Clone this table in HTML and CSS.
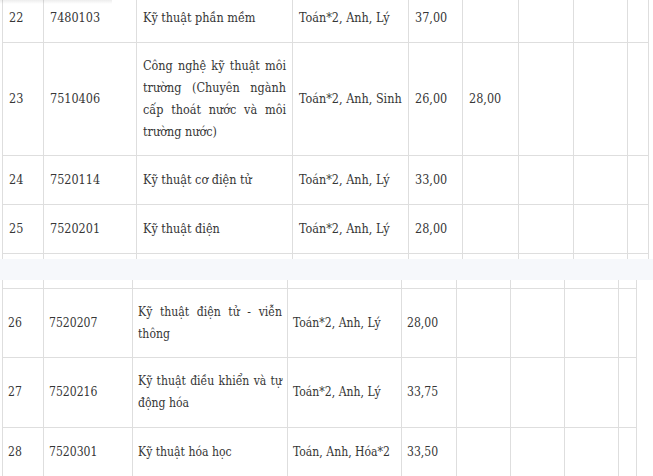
FILE: index.html
```html
<!DOCTYPE html>
<html lang="vi">
<head>
<meta charset="utf-8">
<title>Điểm chuẩn</title>
<link rel="stylesheet" href="styles.css">
</head>
<body>
<div class="page">
  <div class="piece piece-top">
    <table class="grid grid-top">
      <colgroup>
        <col class="c1"><col class="c2"><col class="c3"><col class="c4"><col class="c5"><col class="c6"><col class="c7"><col class="c8"><col class="c9">
      </colgroup>
      <tbody>
        <tr><td>22</td><td>7480103</td><td class="name">Kỹ thuật phần mềm</td><td>Toán*2, Anh, Lý</td><td>37,00</td><td></td><td></td><td></td><td></td></tr>
        <tr><td>23</td><td>7510406</td><td class="name">Công nghệ kỹ thuật môi trường (Chuyên ngành cấp thoát nước và môi trường nước)</td><td>Toán*2, Anh, Sinh</td><td>26,00</td><td>28,00</td><td></td><td></td><td></td></tr>
        <tr><td>24</td><td>7520114</td><td class="name">Kỹ thuật cơ điện tử</td><td>Toán*2, Anh, Lý</td><td>33,00</td><td></td><td></td><td></td><td></td></tr>
        <tr><td>25</td><td>7520201</td><td class="name">Kỹ thuật điện</td><td>Toán*2, Anh, Lý</td><td>28,00</td><td></td><td></td><td></td><td></td></tr>
        <tr><td></td><td></td><td class="name"></td><td></td><td></td><td></td><td></td><td></td><td></td></tr>
      </tbody>
    </table>
  </div>
  <div class="band"></div>
  <div class="piece piece-bottom">
    <table class="grid grid-bottom">
      <colgroup>
        <col class="c1"><col class="c2"><col class="c3"><col class="c4"><col class="c5"><col class="c6"><col class="c7"><col class="c8"><col class="c9">
      </colgroup>
      <tbody>
        <tr class="stub"><td></td><td></td><td></td><td></td><td></td><td></td><td></td><td></td><td></td></tr>
        <tr><td>26</td><td>7520207</td><td class="name">Kỹ thuật điện tử - viễn thông</td><td>Toán*2, Anh, Lý</td><td>28,00</td><td></td><td></td><td></td><td></td></tr>
        <tr class="tall"><td>27</td><td>7520216</td><td class="name">Kỹ thuật điều khiển và tự động hóa</td><td>Toán*2, Anh, Lý</td><td>33,75</td><td></td><td></td><td></td><td></td></tr>
        <tr><td>28</td><td>7520301</td><td class="name">Kỹ thuật hóa học</td><td>Toán, Anh, Hóa*2</td><td>33,50</td><td></td><td></td><td></td><td></td></tr>
      </tbody>
    </table>
  </div>
</div>
</body>
</html>
```
FILE: styles.css
```css
html, body {
  margin: 0;
  padding: 0;
  background: #ffffff;
}

.page {
  width: 653px;
  height: 476px;
  overflow: hidden;
  font-family: "DejaVu Serif", "Liberation Serif", serif;
  font-stretch: condensed;
  font-size: 12.5px;
  line-height: 22px;
  color: #363636;
}

.piece {
  overflow: hidden;
  padding-left: 2px;
}

.piece-top {
  position: relative;
  height: 259px;
}

.piece-top::before {
  content: "";
  position: absolute;
  left: 0;
  top: 0;
  width: 112px;
  height: 4px;
  background: linear-gradient(to bottom, rgba(0, 0, 0, 0.07), rgba(0, 0, 0, 0));
}

.piece-bottom {
  height: 196px;
}

.band {
  height: 21px;
  background: #f6f8fb;
}

.grid {
  border-collapse: collapse;
  table-layout: fixed;
}

.grid td {
  border: 1px solid #dedede;
  padding: 12px 6px;
  vertical-align: middle;
  text-align: left;
  overflow: hidden;
}

.grid tr {
  height: 49px;
}

.grid td.name {
  text-align: justify;
}

.grid-top {
  width: 646px;
  margin-top: -7px;
}

.grid-top .c1 { width: 41px; }
.grid-top .c2 { width: 93px; }
.grid-top .c3 { width: 156px; }
.grid-top .c4 { width: 116px; }
.grid-top .c5 { width: 54px; }
.grid-top .c6 { width: 56px; }
.grid-top .c7 { width: 55px; }
.grid-top .c8 { width: 54px; }
.grid-top .c9 { width: 21px; }

.grid-bottom {
  width: 635px;
  font-size: 12.1px;
}

.grid-bottom td { padding: 12px 5px; }

.grid-bottom .c1 { width: 41px; }
.grid-bottom .c2 { width: 89px; }
.grid-bottom .c3 { width: 155px; }
.grid-bottom .c4 { width: 114px; }
.grid-bottom .c5 { width: 55px; }
.grid-bottom .c6 { width: 54px; }
.grid-bottom .c7 { width: 54px; }
.grid-bottom .c8 { width: 54px; }
.grid-bottom .c9 { width: 18px; }

.grid-bottom tr.stub {
  height: 8px;
}

.grid-bottom tr.stub td {
  padding: 0;
  border-top: 0;
}

.grid-bottom tr.tall {
  height: 70px;
}
```
